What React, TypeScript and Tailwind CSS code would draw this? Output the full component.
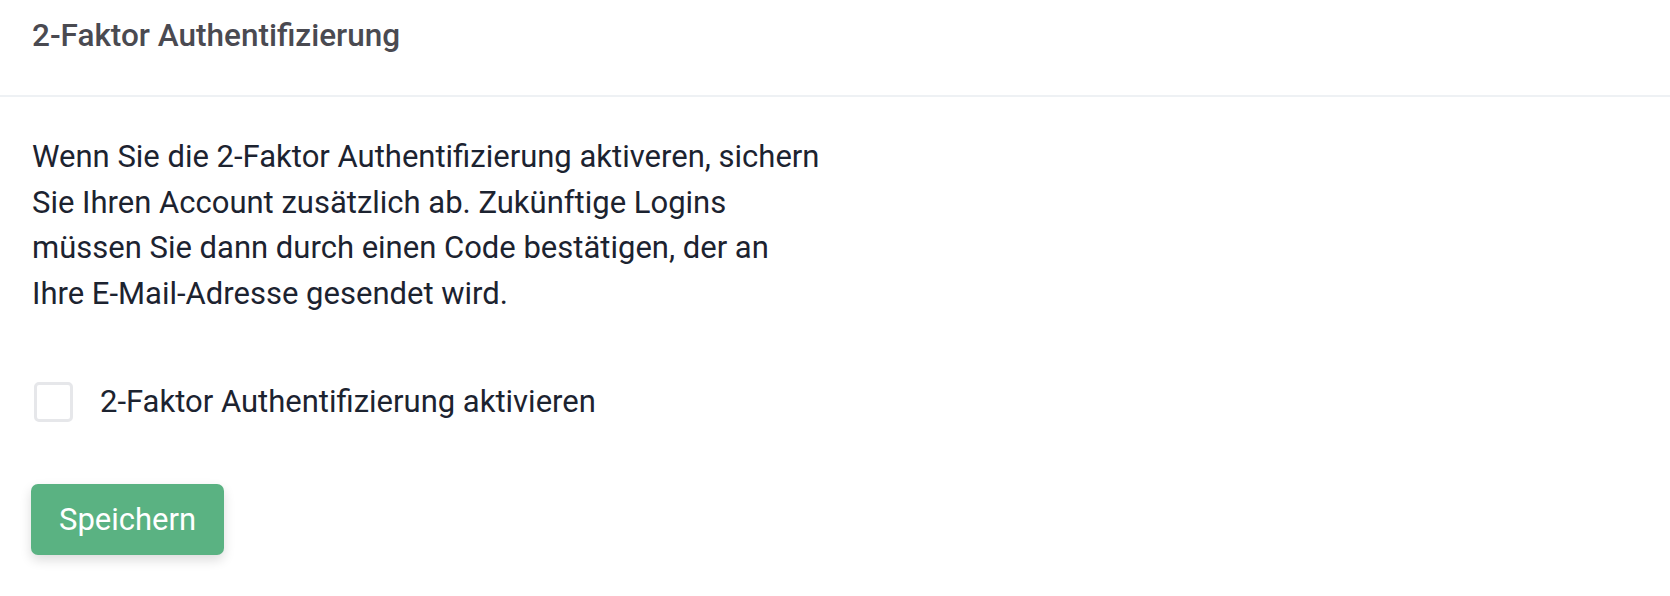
export default function App() {
  return (
    <main className="min-h-[596px] w-full bg-white font-['Roboto',sans-serif] text-[31px] text-[#1c2330]">
      {/* Header */}
      <div className="border-b-2 border-[#eef1f4] px-[32px] pb-[41px] pt-[17px]">
        <h2 className="text-[31.5px] font-medium leading-[37px] text-[#4a4a51]">2-Faktor Authentifizierung</h2>
      </div>

      {/* Body */}
      <div className="px-[32px] pt-[37px]">
        <p className="leading-[45.7px]">
          Wenn Sie die 2-Faktor Authentifizierung aktiveren, sichern
          <br />
          Sie Ihren Account zusätzlich ab. Zukünftige Logins
          <br />
          müssen Sie dann durch einen Code bestätigen, der an
          <br />
          Ihre E-Mail-Adresse gesendet wird.
        </p>

        {/* Checkbox */}
        <label className="mt-[65px] flex items-center gap-[27px] pl-[2px]">
          <span className="h-[40px] w-[39px] shrink-0 rounded-[5px] border-[3px] border-[#e6e7ea] bg-white"></span>
          <span className="leading-[37px]">2-Faktor Authentifizierung aktivieren</span>
        </label>

        {/* Button */}
        <button className="ml-[-1px] mt-[62px] rounded-[7px] bg-[#5ab282] px-[28px] py-[17px] leading-[37px] text-white shadow-[0_5px_12px_rgba(0,0,0,0.14)]">
          Speichern
        </button>
      </div>
    </main>
  )
}
